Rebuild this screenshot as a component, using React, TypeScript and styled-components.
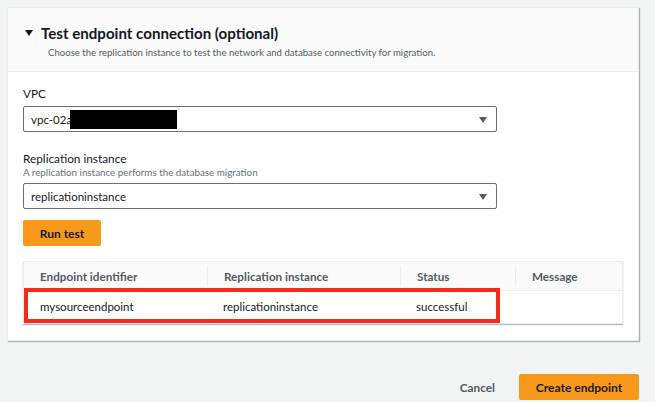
import React from "react";
import styled, { createGlobalStyle } from "styled-components";

const Global = createGlobalStyle`
  html, body { margin: 0; padding: 0; background: #f2f3f3; }
  body { font-family: Lato, "Open Sans", sans-serif; color: #16191f; }
  * { box-sizing: border-box; }
`;

const Page = styled.div`
  width: 655px;
  height: 402px;
  padding: 7px 16px 0 7px;
  overflow: hidden;
`;

const Card = styled.section`
  background: #fff;
  border: 1px solid #eaeded;
  box-shadow: 1px 1px 1px rgba(0, 28, 36, 0.3);
`;

const Header = styled.header`
  background: #fafafa;
  border-bottom: 1px solid #eaeded;
  padding: 14px 16px 12px 16px;
  height: 64px;
`;

const TitleRow = styled.div`
  display: flex;
  align-items: center;
  gap: 8px;
`;

const Caret = styled.span`
  width: 0;
  height: 0;
  border-left: 4px solid transparent;
  border-right: 4px solid transparent;
  border-top: 6px solid #16191f;
  margin-left: 1px;
`;

const Title = styled.h2`
  margin: 0;
  font-size: 15.1px;
  font-weight: 700;
  line-height: 22px;
`;

const Subtitle = styled.p`
  margin: 2px 0 0 24px;
  font-size: 9.6px;
  color: #545b64;
  line-height: 14px;
`;

const Body = styled.div`
  padding: 14px 15px 16px 15px;
  display: flex;
  flex-direction: column;
`;

const Field = styled.div<{ $gap?: number }>`
  display: flex;
  flex-direction: column;
  margin-bottom: ${(p) => p.$gap ?? 0}px;
`;

const Label = styled.label`
  font-size: 11.8px;
  line-height: 16px;
  color: #16191f;
`;

const Hint = styled.span`
  font-size: 9.8px;
  line-height: 12px;
  margin-top: -1px;
  margin-bottom: 1px;
  color: #687078;
`;

const Select = styled.div`
  position: relative;
  width: 474px;
  height: 26px;
  margin-top: 4px;
  border: 1px solid #687078;
  border-radius: 2px;
  display: flex;
  align-items: center;
  padding: 0 7px;
  font-size: 11.5px;
  color: #16191f;
`;

const Arrow = styled.span`
  position: absolute;
  right: 9px;
  top: 10px;
  width: 0;
  height: 0;
  border-left: 4px solid transparent;
  border-right: 4px solid transparent;
  border-top: 6px solid #545b64;
`;

const Redact = styled.span`
  display: inline-block;
  width: 107px;
  height: 19px;
  margin-left: -2px;
  background: #000;
`;

const OrangeButton = styled.button<{ $w: number }>`
  width: ${(p) => p.$w}px;
  height: 26px;
  border: none;
  border-radius: 2px;
  background: #f8991c;
  color: #16191f;
  font-family: inherit;
  font-weight: 700;
  font-size: 12px;
  padding: 0;
`;

const Table = styled.div`
  position: relative;
  width: 600px;
  margin-top: 15px;
  border: 1px solid #eaeded;
  box-shadow: 0 1px 1px rgba(0, 28, 36, 0.3);
`;

const Row = styled.div<{ $head?: boolean }>`
  display: grid;
  grid-template-columns: 183px 193px 115px 1fr;
  height: ${(p) => (p.$head ? 29 : 32)}px;
  background: ${(p) => (p.$head ? "#fafafa" : "#fff")};
  border-bottom: ${(p) => (p.$head ? "1px solid #eaeded" : "none")};
  align-items: center;
`;

const Cell = styled.div<{ $head?: boolean; $div?: boolean }>`
  padding-left: 16px;
  font-size: ${(p) => (p.$head ? 11.7 : 11.5)}px;
  font-weight: ${(p) => (p.$head ? 700 : 400)};
  color: ${(p) => (p.$head ? "#545b64" : "#16191f")};
  border-left: ${(p) => (p.$div ? "1px solid #eaeded" : "none")};
  line-height: 20px;
`;

const Highlight = styled.div`
  position: absolute;
  left: 0;
  top: 26px;
  width: 476px;
  height: 35px;
  border: 4px solid #f62a1a;
  pointer-events: none;
`;

const Footer = styled.footer`
  display: flex;
  justify-content: flex-end;
  align-items: center;
  gap: 24px;
  margin-top: 33px;
`;

const LinkButton = styled.button`
  border: none;
  background: none;
  padding: 0;
  font-family: inherit;
  font-weight: 700;
  font-size: 11.8px;
  color: #545b64;
`;

export default function App() {
  return (
    <>
      <Global />
      <Page>
        <Card>
          <Header>
            <TitleRow>
              <Caret />
              <Title>Test endpoint connection (optional)</Title>
            </TitleRow>
            <Subtitle>
              Choose the replication instance to test the network and database connectivity for migration.
            </Subtitle>
          </Header>
          <Body>
            <Field $gap={19}>
              <Label>VPC</Label>
              <Select>
                vpc-02a
                <Redact />
                <Arrow />
              </Select>
            </Field>
            <Field $gap={11}>
              <Label>Replication instance</Label>
              <Hint>A replication instance performs the database migration</Hint>
              <Select>
                replicationinstance
                <Arrow />
              </Select>
            </Field>
            <OrangeButton $w={78}>Run test</OrangeButton>
            <Table>
              <Row $head>
                <Cell $head>Endpoint identifier</Cell>
                <Cell $head $div>Replication instance</Cell>
                <Cell $head $div>Status</Cell>
                <Cell $head $div>Message</Cell>
              </Row>
              <Row>
                <Cell>mysourceendpoint</Cell>
                <Cell>replicationinstance</Cell>
                <Cell>successful</Cell>
                <Cell></Cell>
              </Row>
              <Highlight />
            </Table>
          </Body>
        </Card>
        <Footer>
          <LinkButton>Cancel</LinkButton>
          <OrangeButton $w={120}>Create endpoint</OrangeButton>
        </Footer>
      </Page>
    </>
  );
}
